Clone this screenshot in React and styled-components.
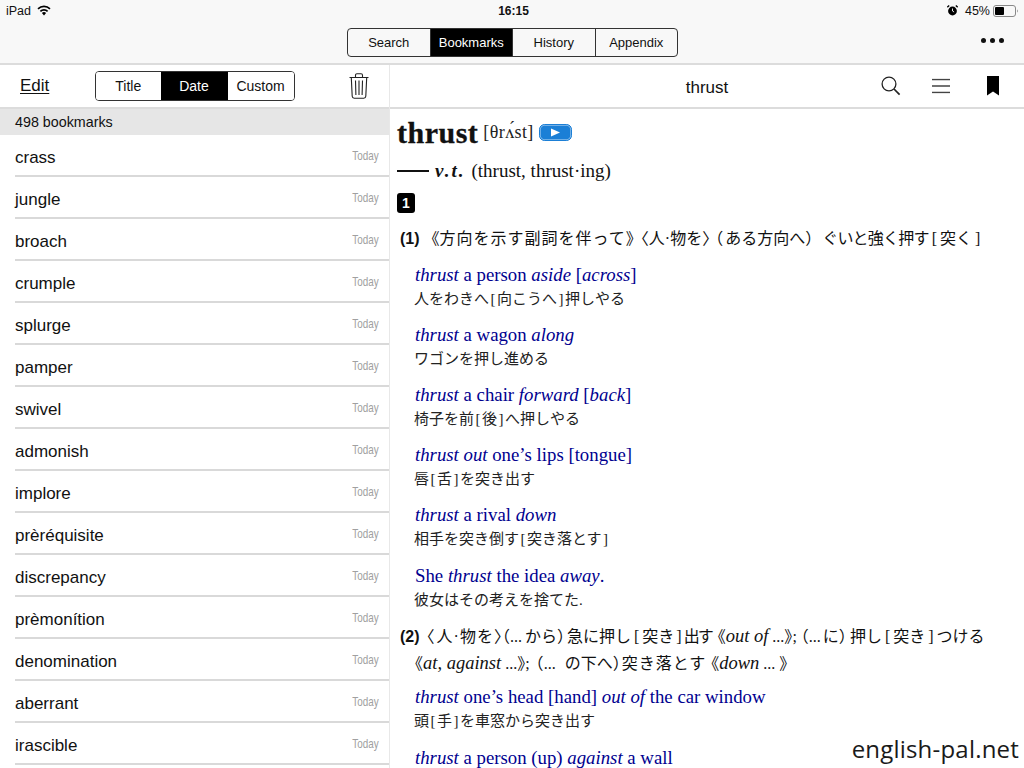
import styled, { createGlobalStyle } from "styled-components";

const SANS = `"Liberation Sans", Arial, sans-serif`;
const SERIF = `"Liberation Serif", "Noto Sans CJK JP", serif`;

const Global = createGlobalStyle`
  html, body { margin: 0; padding: 0; background: #fff; }
  body { font-family: ${SANS}; color: #000; }
`;

const words = [
  "crass", "jungle", "broach", "crumple", "splurge", "pamper", "swivel", "admonish",
  "implore", "prèréquisite", "discrepancy", "prèmonítion", "denomination", "aberrant", "irascible",
];

const examples = [
  { en: <><i>thrust</i> a person <i>aside</i> [<i>across</i>]</>, ja: "人をわきへ[向こうへ]押しやる" },
  { en: <><i>thrust</i> a wagon <i>along</i></>, ja: "ワゴンを押し進める" },
  { en: <><i>thrust</i> a chair <i>forward</i> [<i>back</i>]</>, ja: "椅子を前[後]へ押しやる" },
  { en: <><i>thrust out</i> one’s lips [tongue]</>, ja: "唇[舌]を突き出す" },
  { en: <><i>thrust</i> a rival <i>down</i></>, ja: "相手を突き倒す[突き落とす]" },
  { en: <>She <i>thrust</i> the idea <i>away</i>.</>, ja: "彼女はその考えを捨てた." },
];

// the brackets in the Japanese lines sit wider than the ascii glyphs
const withBrackets = (text) =>
  text.split(/([\[\]])/).map((part, i) =>
    part === "[" || part === "]" ? <Bracket key={i}>{part}</Bracket> : part
  );

const Wifi = () => (
  <svg width="14" height="11" viewBox="0 0 14 11">
    <path d="M7 10.5 4.9 8.1a3 3 0 0 1 4.2 0z" fill="#000" />
    <path d="M3.4 6.4a5 5 0 0 1 7.2 0M1 3.9a8.4 8.4 0 0 1 12 0" fill="none" stroke="#000" strokeWidth="1.6" />
  </svg>
);

const Alarm = () => (
  <svg width="11" height="11" viewBox="0 0 11 11">
    <circle cx="5.5" cy="6" r="4.4" fill="#000" />
    <path d="M5.5 3.5V6l1.6 1" stroke="#fff" strokeWidth="0.9" fill="none" />
    <path d="M0.3 2.2 2.2 0.5M10.7 2.2 8.8 0.5" stroke="#000" strokeWidth="1.3" />
  </svg>
);

const Battery = () => (
  <svg width="26" height="12" viewBox="0 0 26 12">
    <rect x="0.5" y="0.5" width="22" height="11" rx="2.5" fill="none" stroke="#888" />
    <rect x="2" y="2" width="9" height="8" rx="1" fill="#000" />
    <path d="M24 4.5c1 .3 1 2.7 0 3z" fill="#888" />
  </svg>
);

const Trash = () => (
  <svg width="20" height="26" viewBox="0 0 20 26" fill="none" stroke="#222" strokeWidth="1.1">
    <path d="M0.5 4.5h19M6.5 4.3V2.2c0-.9.6-1.4 1.4-1.4h4.2c.8 0 1.4.5 1.4 1.4v2.1" />
    <path d="M2.3 4.7l.9 18.6c.1 1.2.8 1.9 2 1.9h9.6c1.2 0 1.9-.7 2-1.9l.9-18.6" />
    <path d="M6.5 7.5l.4 14.5M10 7.5V22M13.5 7.5l-.4 14.5" />
  </svg>
);

const Search = () => (
  <svg width="20" height="20" viewBox="0 0 20 20" fill="none" stroke="#222" strokeWidth="1.3">
    <circle cx="8" cy="8" r="6.9" />
    <path d="M13 13l5.6 5.6" strokeWidth="1.7" />
  </svg>
);

const Menu = () => (
  <svg width="18" height="15" viewBox="0 0 18 15" stroke="#444" strokeWidth="1.3">
    <path d="M0 1h18M0 7.5h18M0 14h18" />
  </svg>
);

const Bookmark = () => (
  <svg width="12" height="20" viewBox="0 0 12 20">
    <path d="M0 0h12v19.5L6 15.5 0 19.5z" fill="#000" />
  </svg>
);

const Play = () => (
  <svg width="33" height="17" viewBox="0 0 33 17">
    <rect x="1" y="1" width="31" height="15" rx="4" fill="#1b7fd6" stroke="#1b7fd6" />
    <rect x="1.2" y="1.2" width="30.6" height="14.6" rx="4.5" fill="none" stroke="#fff" strokeWidth="0.8" opacity="0.7" />
    <rect x="0.5" y="0.5" width="32" height="16" rx="5" fill="none" stroke="#1b7fd6" />
    <path d="M12 4.5v8l9-4z" fill="#fff" />
  </svg>
);

export default function App() {
  return (
    <Page>
      <Global />
      <TopBar>
        <StatusBar>
          <StatusSide>
            <span>iPad</span>
            <Wifi />
          </StatusSide>
          <Clock>16:15</Clock>
          <StatusSide $right>
            <Alarm />
            <Percent>45%</Percent>
            <Battery />
          </StatusSide>
        </StatusBar>
        <NavRow>
          <NavTabs>
            <NavTab>Search</NavTab>
            <NavTab $active>Bookmarks</NavTab>
            <NavTab>History</NavTab>
            <NavTab>Appendix</NavTab>
          </NavTabs>
          <More>
            <Dot />
            <Dot />
            <Dot />
          </More>
        </NavRow>
      </TopBar>
      <Columns>
        <Sidebar>
          <SideTools>
            <EditLink>Edit</EditLink>
            <SortTabs>
              <SortTab $w={64.5}>Title</SortTab>
              <SortTab $w={67} $active>Date</SortTab>
              <SortTab $w={66}>Custom</SortTab>
            </SortTabs>
            <TrashSlot><Trash /></TrashSlot>
          </SideTools>
          <CountBar>498 bookmarks</CountBar>
          <List>
            {words.map((w) => (
              <Row key={w}>
                <Word>{w}</Word>
                <When>Today</When>
              </Row>
            ))}
          </List>
        </Sidebar>
        <Main>
          <MainTools>
            <MainTitle>thrust</MainTitle>
            <IconSlot $left={881}><Search /></IconSlot>
            <IconSlot $left={932}><Menu /></IconSlot>
            <IconSlot $left={987}><Bookmark /></IconSlot>
          </MainTools>
          <Entry>
            <HeadLine>
              <Headword>thrust</Headword>
              <Pron>[θrʌ́st]</Pron>
              <Play />
            </HeadLine>
            <PosLine>
              <Dash />
              <Pos>v.t.</Pos>
              <span>(thrust, thrust·ing)</span>
            </PosLine>
            <BadgeLine><Badge>1</Badge></BadgeLine>
            <Sense>
              <b>(1)</b>
              <Mark $l={12}>《</Mark><Run $ls={1}>方向を示す副詞を伴って</Run><Mark>》</Mark>
              <Mark $l={7}>〈</Mark>人·物を<Mark>〉</Mark>
              <Mark $l={5}>（</Mark><Run $ml={2}>ある方向へ</Run><Mark>）</Mark>
              <Run $ml={9} $ls={-0.8}>ぐいと強く押す</Run><Bracket $m={3}>[</Bracket>突く<Bracket $m={3}>]</Bracket>
            </Sense>
            {examples.map((ex, i) => (
              <Example key={i}>
                <En>{ex.en}</En>
                <Ja>{withBrackets(ex.ja)}</Ja>
              </Example>
            ))}
            <Sense $top={10.7}>
              <b>(2)</b>
              <Mark $l={7}>〈</Mark><Run $ml={2} $ls={1}>人·物を</Run><Mark>〉</Mark>
              <Mark>（</Mark>...<Run $ml={3}>から</Run><Mark>）</Mark>
              <Run $ml={2}>急に押し</Run><Bracket $m={3}>[</Bracket>突き<Bracket $m={2}>]</Bracket>
              <Run $ls={-2}>出す</Run>
              <Mark $l={6}>《</Mark><i>out of</i> ...<Mark>》</Mark>; <Mark>（</Mark>...<Run $ml={2}>に</Run><Mark>）</Mark>
              <Run $ml={3}>押し</Run><Bracket $m={3}>[</Bracket>突き<Bracket $m={3}>]</Bracket>つける
              <br />
              <Cont>
                <Mark>《</Mark><i>at, against</i> ...<Mark>》</Mark>; <Mark $l={2}>（</Mark>...<Run $ml={9}>の下へ</Run><Mark>）</Mark>
                <Run $ml={1} $ls={1}>突き落とす</Run><Mark $l={5}>《</Mark><i>down</i> ...<Mark $l={4}>》</Mark>
              </Cont>
            </Sense>
            <Example $top={7}>
              <En><i>thrust</i> one’s head [hand] <i>out of</i> the car window</En>
              <Ja>{withBrackets("頭[手]を車窓から突き出す")}</Ja>
            </Example>
            <Example>
              <En><i>thrust</i> a person (up) <i>against</i> a wall</En>
            </Example>
          </Entry>
        </Main>
      </Columns>
      <Watermark>english-pal.net</Watermark>
    </Page>
  );
}

const Page = styled.div`
  position: relative;
  width: 1024px;
  height: 768px;
  overflow: hidden;
  background: #fff;
`;

const TopBar = styled.header`
  height: 63px;
  background: #f8f8f8;
  border-bottom: 2px solid #dcdcdc;
`;

const StatusBar = styled.div`
  height: 21px;
  padding: 0 5px 0 6px;
  display: grid;
  grid-template-columns: 1fr auto 1fr;
  align-items: center;
  font-size: 12.5px;
  color: #111;
`;

const StatusSide = styled.div`
  display: flex;
  align-items: center;
  gap: 6px;
  justify-content: ${(p) => (p.$right ? "flex-end" : "flex-start")};
`;

const Percent = styled.span`
  margin: 0 -3px 0 1px;
`;

const Clock = styled.div`
  font-weight: bold;
  font-size: 12px;
  margin-left: 2px;
`;

const NavRow = styled.div`
  position: relative;
  height: 42px;
  display: flex;
  justify-content: center;
  padding: 7px 0 6px;
  box-sizing: border-box;
`;

const NavTabs = styled.div`
  display: flex;
  width: 331px;
  height: 29px;
  margin-left: 1px;
  box-sizing: border-box;
  border: 1.5px solid #333;
  border-radius: 4px;
  overflow: hidden;
`;

const NavTab = styled.div`
  flex: 1;
  display: flex;
  align-items: center;
  justify-content: center;
  font-size: 13px;
  color: ${(p) => (p.$active ? "#fff" : "#111")};
  background: ${(p) => (p.$active ? "#000" : "transparent")};
  & + & {
    border-left: 1.5px solid #333;
  }
`;

const More = styled.div`
  position: absolute;
  right: 20px;
  top: 17px;
  display: flex;
  gap: 4px;
`;

const Dot = styled.span`
  width: 5px;
  height: 5px;
  border-radius: 50%;
  background: #111;
`;

const Columns = styled.div`
  display: flex;
`;

const Sidebar = styled.aside`
  width: 389px;
  flex: none;
  border-right: 1px solid #e8e8e8;
`;

const SideTools = styled.div`
  height: 42px;
  display: flex;
  align-items: center;
  border-bottom: 2px solid #dcdcdc;
  background: #fff;
`;

const EditLink = styled.span`
  width: 30px;
  margin-left: 20px;
  font-size: 17px;
  text-decoration: underline;
  text-underline-offset: 2px;
  color: #111;
`;

const SortTabs = styled.div`
  margin-left: 45px;
  display: flex;
  height: 30px;
  box-sizing: border-box;
  border: 1.5px solid #333;
  border-radius: 4px;
  overflow: hidden;
`;

const SortTab = styled.div`
  width: ${(p) => p.$w}px;
  display: flex;
  align-items: center;
  justify-content: center;
  font-size: 14px;
  color: ${(p) => (p.$active ? "#fff" : "#111")};
  background: ${(p) => (p.$active ? "#000" : "#fff")};
`;

const TrashSlot = styled.div`
  margin-left: 54px;
  display: flex;
`;

const CountBar = styled.div`
  height: 26px;
  padding-left: 15px;
  display: flex;
  align-items: center;
  background: #e6e6e6;
  font-size: 14.3px;
  color: #111;
`;

const List = styled.div`
  padding-left: 15px;
`;

const Row = styled.div`
  box-sizing: border-box;
  height: 42px;
  padding: 5px 10px 0 0;
  display: flex;
  align-items: center;
  justify-content: space-between;
  border-bottom: 2px solid #d9d9d9;
`;

const Word = styled.span`
  font-size: 17px;
  color: #111;
`;

const When = styled.span`
  font-size: 13px;
  color: #a0a0a0;
  transform: scaleX(0.76);
  transform-origin: right center;
  margin-top: -4px;
`;

const Main = styled.main`
  flex: 1;
  min-width: 0;
`;

const MainTools = styled.div`
  position: relative;
  height: 42px;
  display: flex;
  align-items: center;
  justify-content: center;
  border-bottom: 2px solid #dcdcdc;
`;

const MainTitle = styled.div`
  font-size: 17px;
  color: #111;
  margin-top: 3px;
`;

const IconSlot = styled.div`
  position: absolute;
  left: ${(p) => p.$left - 390}px;
  top: 50%;
  transform: translate(0, -50%);
  display: flex;
`;

const Entry = styled.article`
  padding: 9px 0 0 7px;
  font-family: ${SERIF};
  font-size: 17px;
  color: #111;
`;

const HeadLine = styled.div`
  height: 29px;
  display: flex;
  align-items: center;
  gap: 5px;
`;

const Headword = styled.span`
  font-size: 30px;
  font-weight: bold;
  letter-spacing: 0.5px;
  color: #111;
  -webkit-text-stroke: 0.3px #111;
`;

const Pron = styled.span`
  font-size: 18px;
  letter-spacing: 0.4px;
  color: #222;
`;

const PosLine = styled.div`
  margin-top: 11px;
  height: 25px;
  display: flex;
  align-items: center;
  gap: 6px;
  font-size: 19px;
`;

const Dash = styled.span`
  width: 32px;
  height: 2px;
  background: #111;
`;

const Pos = styled.span`
  font-weight: bold;
  font-style: italic;
  letter-spacing: 2px;
`;

const BadgeLine = styled.div`
  margin-top: 10px;
  height: 20px;
`;

const Badge = styled.span`
  display: flex;
  align-items: center;
  justify-content: center;
  width: 18px;
  height: 20px;
  border-radius: 3px;
  background: #000;
  color: #fff;
  font-family: ${SANS};
  font-size: 14px;
  font-weight: bold;
`;

const Sense = styled.p`
  margin: ${(p) => p.$top ?? 12.5}px 0 0 3px;
  font-size: 16px;
  line-height: 26px;
  white-space: nowrap;
  b {
    font-family: ${SANS};
    font-size: 16px;
  }
  i {
    font-size: 18.5px;
  }
`;

// double and angle marks take half of their square in the reference
const Mark = styled.span`
  font-feature-settings: "halt";
  margin-left: ${(p) => p.$l ?? 0}px;
`;

// a stretch of Japanese tightened or opened up to the reference's width
const Run = styled.span`
  letter-spacing: ${(p) => p.$ls ?? 0}px;
  margin-left: ${(p) => p.$ml ?? 0}px;
`;

const Bracket = styled.span`
  margin: 0 ${(p) => p.$m ?? 1.5}px;
`;

const Cont = styled.span`
  margin-left: 15px;
`;

const Example = styled.div`
  margin: ${(p) => p.$top ?? 10.2}px 0 0 18px;
`;

const En = styled.div`
  color: #00008f;
  font-size: 18.8px;
  line-height: 25px;
  white-space: nowrap;
`;

const Ja = styled.div`
  margin-left: -1px;
  font-size: 15px;
  line-height: 25px;
  color: #222;
  white-space: nowrap;
`;

const Watermark = styled.div`
  position: absolute;
  right: 0;
  bottom: 2px;
  padding: 0 5px 0 8px;
  font-family: "Open Sans", sans-serif;
  font-size: 24px;
  line-height: 34px;
  letter-spacing: 0.2px;
  color: #1a1a1a;
`;
